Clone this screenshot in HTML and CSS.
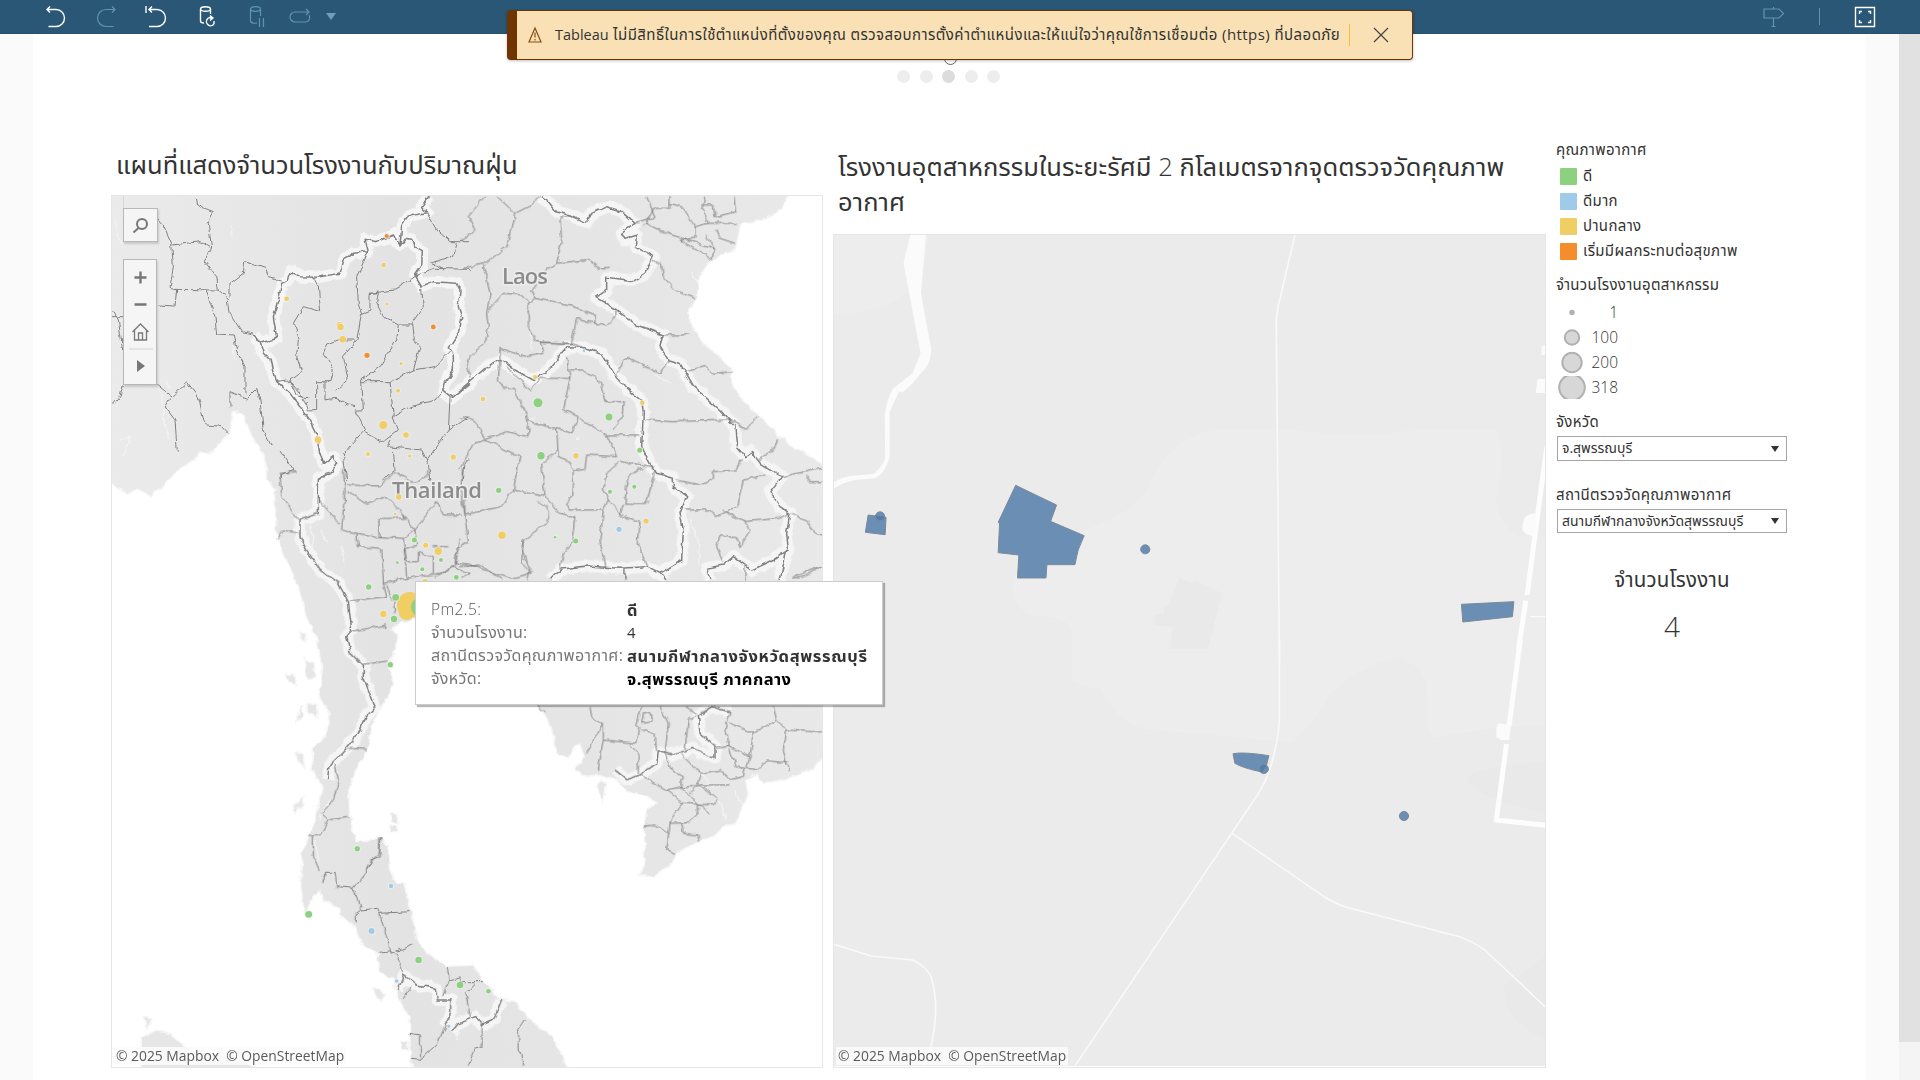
FILE: index.html
```html
<!DOCTYPE html>
<html lang="th">
<head>
<meta charset="utf-8">
<title>Tableau</title>
<link rel="stylesheet" href="styles.css">
</head>
<body>
<header class="toolbar">
  <svg class="tool tool-undo" width="24" height="24" viewBox="0 0 24 24"><path d="M3 4.5H12a7.8 7.8 0 0 1 0 17H4.500M6 1.500L3 4.500L6 7.500"/></svg>
  <svg class="tool tool-redo dim" width="24" height="24" viewBox="0 0 24 24"><path d="M21 4.500H12a7.800 7.800 0 0 0 0 17H19.500M18 1.500L21 4.500L18 7.500"/></svg>
  <svg class="tool tool-reset" width="24" height="24" viewBox="0 0 24 24"><path d="M5 4.500H13a7.800 7.800 0 0 1 0 17H5M8 1.500L5 4.500L8 7.500M2 1V8"/></svg>
  <svg class="tool tool-refresh" width="24" height="24" viewBox="0 0 24 24"><ellipse cx="8.500" cy="4" rx="5" ry="2.300"/><path d="M3.500 4V16C3.500 17.500 5 18 7 18M13.500 4V9M16 13A4.200 4.200 0 1 0 17 19M17 19V16M12.500 13H16M13 10.500L16 13L13 15.500"/></svg>
  <svg class="tool tool-pause dim" width="24" height="24" viewBox="0 0 24 24"><ellipse cx="8.500" cy="4" rx="5" ry="2.300"/><path d="M3.500 4V16C4 18 7 18.500 10 18M13.500 4V11M12.500 13V22M16.500 13V22"/></svg>
  <svg class="tool tool-loop dim" width="24" height="24" viewBox="0 0 24 24"><path d="M21 7H7a4.500 4.500 0 0 0 0 10H17a4.500 4.500 0 0 0 4-7M18 4L21 7L18 10"/></svg>
  <svg class="tool-caret" width="10" height="8" viewBox="0 0 10 8"><path d="M0 0H10L5 7Z"/></svg>
  <svg class="tool tool-sign dim" width="24" height="24" viewBox="0 0 24 24"><path d="M2 4H17L21.500 8.500L17 13H2ZM11.500 2V4M11.500 13V21.500M9.500 21.500H13.500"/></svg>
  <i class="tool-divider"></i>
  <svg class="tool tool-full" width="24" height="24" viewBox="0 0 24 24"><path d="M2.500 2.500H21.500V21.500H2.500ZM6.500 9V6.500H9M15 6.500H17.500V9M17.500 15V17.500H15M9 17.500H6.500V15"/></svg>
</header>

<div class="notice">
  <svg width="14" height="18" viewBox="0 0 14 18"><path d="M7 2L13 16H1ZM7 6.500V11.500M7 13V14.500"/></svg>
  <span class="notice-text"><span class="latin">Tableau</span> ไม่มีสิทธิ์ในการใช้ตำแหน่งที่ตั้งของคุณ ตรวจสอบการตั้งค่าตำแหน่งและให้แน่ใจว่าคุณใช้การเชื่อมต่อ (https) ที่ปลอดภัย</span>
  <svg class="notice-close" width="16" height="16" viewBox="0 0 16 16"><path d="M1 1L15 15M15 1L1 15"/></svg>
</div>

<main class="workspace">
  <div class="dashboard">
    <nav class="pager"><b class="ring"></b><i></i><i></i><i class="current"></i><i></i><i></i></nav>
    <div class="columns">
      <section class="panel panel-left">
        <h2 class="title">แผนที่แสดงจำนวนโรงงานกับปริมาณฝุ่น</h2>
        <div class="map">
          <svg width="710" height="871" viewBox="112 196 710 871">
            <defs>
              <filter id="rough" filterUnits="userSpaceOnUse" x="100" y="180" width="740" height="900"><feTurbulence type="fractalNoise" baseFrequency=".12" numOctaves="2" seed="4"/><feDisplacementMap in="SourceGraphic" scale="5.500" xChannelSelector="R" yChannelSelector="G"/></filter>
              <linearGradient id="relief" x1="0" x2="1"><stop offset="0" stop-color="#ebebeb"/><stop offset=".4" stop-color="#e3e3e3"/><stop offset=".75" stop-color="#e6e6e6"/><stop offset="1" stop-color="#e9e9e9"/></linearGradient>
            </defs>
            <g class="land" filter="url(#rough)">
              <path fill="url(#relief)" d="M100 185L792 185L788 196L780 210L760 220L740 223L735 248L708 262L697 280L696 297L687 313L693 330L707 348L730 367L731 382L743 402L760 417L780 438L803 453L835 472L835 748L813 767L797 775L773 781L763 782L757 773L745 780L747 793L740 811L735 823L723 826L715 835L697 842L677 852L672 863L653 876L641 875L645 865L645 827L647 810L658 803L647 796L630 792L617 780L600 775L583 775L575 770L585 757L580 742L573 748L568 757L557 753L555 737L548 720L540 707L520 680L490 660L460 650L430 625L415 618L400 622L390 628L396 635L395 650L388 663L393 683L383 703L372 723L367 750L355 770L348 790L349 817L355 842L367 842L380 837L387 847L389 870L396 885L404 883L410 910L417 940L426 953L447 967L473 966L482 980L500 1000L515 1002L529 1020L552 1037L570 1075L414 1075L411 1047L410 1017L398 997L398 982L379 970L378 953L361 943L356 927L342 917L340 907L324 900L319 890L310 900L305 915L301 880L303 853L310 835L313 830L323 787L313 770L313 748L327 737L330 713L320 697L323 670L317 637L307 617L300 590L292 570L282 550L277 530L275 490L267 477L267 465L263 453L253 437L243 413L233 410L228 433L210 453L200 452L193 460L177 470L167 480L160 487L150 495L137 488L128 493L105 480Z"/>
              <path d="M142 1037L157 1032L170 1034L184 1047L230 1058L275 1075L142 1075ZM145 1018l6 2l-3 6zM374 954l6 2M375 988l9 6l-3 6l-6-6zM600 782l6 2l-3 16l-5-12zM392 814l5 1v8l-5-2zM391 826l5 1v4h-5zM305 660l8 3l2 12l-8 4zM301 633l4 2v6l-4-2zM302 706l-4 14l4-4zM308 704l8 2v10l-8-4zM295 751l8 6v8l-4-6zM295 806l8-8v5l-7 8zM287 675l7 1l2 8l-7-3zM402 1042h6v8h-5z"/>
            </g>
            <g class="country-halo" filter="url(#rough)"><use href="#countries"/></g>
            <g class="rivers" filter="url(#rough)"><path d="M310 525l4 12l-2 10M341 545l4 18M321 530l6 14M690 520l8 20l2 25M165 380l6 8M160 390l4 30l6 20M120 440l10-3l-6 18M232 345l4 15M231 225l1 12M115 220l6 25M330 800l-8 12l-2 8M530 420l6-4M575 440l4-3M655 375l16 8M700 285l-8-12M530 330l2 20M720 800l6 20M735 790l8 16M700 770l12 18M315 840l4 20M460 1015l-3 25"/></g>
            <g class="provinces" filter="url(#rough)">
              <g transform="translate(100 180) scale(.33333)">
                <path d="M70 48V85M172 115L190 135L215 190L220 260L210 325L230 330L225 378L172 375M285 48L290 75L340 95L325 130L335 205L310 240L350 290L355 330L225 328M218 195L300 185L332 205M318 330L345 410L350 465L400 468L410 510L435 560L435 640M355 330L385 355L390 400L425 455L462 462M390 350L390 310L430 280L435 242L495 262L505 290L545 300M172 615L215 650L260 605L295 650L315 735L360 738L382 762M210 655L195 680L225 720L232 815M390 680L390 635L440 655L470 625L480 660L490 750L515 800M540 810L560 840L582 870L540 885V900M38 390L55 420L68 510M38 675L60 650L70 615M36 410H70M640 292L655 320L662 395L610 380L580 430L595 480L590 530L605 575L570 600L590 645L625 650M525 605L565 600L610 650L625 690L650 688L650 605H690L700 570L670 520L680 495L720 480L765 480M675 605V660L705 655L745 675L765 680M805 215L770 290L775 370L785 400L770 480L730 530L745 600L705 635M785 400L810 390V340L835 338L830 370L850 410L895 435L890 480L840 560L785 600L790 690L765 690L795 750L730 825L740 900M810 340L885 330L945 290M945 285L1000 265L1110 268M980 98L1010 150L1050 185L1110 185M1072 190L1060 225L995 250L1030 265M965 325L970 380L935 430L940 480L960 500L940 570L870 605L785 605M895 435H935M940 570L1005 560L1050 515M870 605L880 710L930 680L1005 660L1035 625M880 710L895 750L850 785L795 755M1050 655L1045 750L980 840L965 810L860 800L870 780M880 810L885 870L850 900M980 840L990 900M1045 750L1105 710M1110 835L1095 850L1090 900"/>
              </g>
              <g transform="translate(460 180) scale(.33333)">
                <path d="M75 48L25 110L45 150L0 185M110 48L165 100L140 200L75 250L0 268M165 100L215 75L240 48M330 105L300 115L305 180L290 250L390 238L410 265L450 262M290 250L260 270L215 330L225 355L340 380L405 405V430L350 415L335 490L225 485L205 440L205 365L190 345L130 340L85 390M70 255L90 340L80 400L85 440L75 490L20 540L30 595M405 430L440 438L465 410V385M225 355L205 370M240 487L340 492L365 500M240 487L255 520L200 530L120 505V540M525 130L560 120L585 110L560 50M555 130L620 160L700 185L765 205L750 240M555 135L580 85L630 85V48M630 70L665 80L705 140L705 175L660 180L750 235M735 48L725 90L745 130L705 140M745 130L830 130M730 75H760L765 110L830 95L825 50M770 150L780 175L825 190M735 165L765 210M580 240L605 255L610 290L645 330L705 355M610 465L690 465M680 570L740 560L760 580L815 575M470 585L490 540L510 535L600 580L625 540M120 540L115 600L130 625L160 625L195 690L200 725L205 770L140 755L75 780L50 730L20 710L0 715M140 560L210 630L240 595L330 595L320 530M330 570L370 570L420 605L435 665L490 665L485 720L460 750M330 595L310 690L355 710L335 760L290 745L225 730L200 720M360 715L440 765L470 830L380 825L375 865L340 870L320 840L295 830L290 745M440 765H540M555 720L640 725L805 720L860 745L895 710M75 780L40 790L0 870M75 780L180 830L160 930L120 980L15 1005V940M160 930L255 950L300 1000L345 1010L335 1090L310 1120L300 1165M255 950L245 850L290 810M340 870L335 950L320 970L330 990L430 990L420 1080L435 1165M430 990L445 960L430 930L440 880L480 845L580 860M550 865L515 880L500 910L495 970L560 970L585 870M480 1010L490 970M445 960L490 1010L540 1025L535 1090L560 1160M235 960L265 990L265 1025L190 1080L185 1110L210 1170L200 1200M675 990H750L765 1010L830 980L850 900L915 885M650 900L720 915L760 900V875L830 870L845 840M785 990L850 1025L955 1015L990 1000M850 1025L870 1050L840 1100L830 1070L780 1065L770 1100L790 1145M965 890L1085 865M1045 885L1045 905L1085 905M895 840L950 800L955 775M995 1000L1040 1025L1065 1060L1085 1065M1085 1160L1040 1185L1000 1195M855 1160V1200M0 1160L60 1155L130 1200M495 1165V1200"/>
              </g>
              <g transform="translate(100 470) scale(.33333)">
                <path d="M590 5L540 10L545 80L595 150M535 210L550 180L595 190M655 90L720 160M730 0L735 60L725 180L770 190L835 200L910 205L945 180L990 120L1010 95M740 45L840 48L885 5L940 40L980 20V0M740 65L800 100L860 80L910 130L945 180M910 130L915 145L840 145L840 200M770 190L775 230L845 235L850 340L920 325L910 205M1090 0L1085 60L1100 180L1105 215L1070 235L1065 280L1140 290M1010 95L1030 135L1085 135M850 340L860 380L750 393M750 485L860 465L855 475M860 345L880 400L885 430M790 583L865 573M745 835L800 838M705 880L715 930L700 990L665 1030L685 1050L745 1042M685 1050L660 1095L625 1100M640 1100V1160L658 1200M840 1100L838 1150L805 1180L800 1200M920 325L1020 310L1060 290L1110 310L1085 325M945 180L950 230L915 235L920 275L955 275V245L1000 260V310M1000 230L1045 230"/>
              </g>
              <g transform="translate(400 540) scale(.33333)">
                <path d="M180 0L165 80L105 110M370 0L365 70L395 100L330 115L210 75M675 85V123M1180 110L1265 80M410 495L433 520M570 500L575 530L610 550V600L595 690M610 550L560 640M610 600L710 610L720 560L710 555L725 500M730 520L750 515L755 545L725 550ZM780 500L805 550L795 640M725 570L765 580L770 635M690 615L715 640V700M860 500L890 520M890 525L865 540L855 630M990 515L975 570L985 620L1050 650L1060 580L990 550M1120 500L1130 540L1160 570L1150 630L1165 690M1060 580L1130 540M1160 570L1240 575L1265 572M1050 650L1040 685L1075 690L1100 660L1165 665M985 620L945 625M990 630L1005 680L1035 685L1030 710L990 720L960 690L905 700L890 735L985 735M840 640L870 670L905 700M795 640L815 690L850 710L840 740L800 750L725 705M840 740L895 790L930 820M840 740L905 740L955 775L940 795L850 790L815 835L810 850L865 848L895 820V790M890 740L870 760M800 750L850 790M735 858L765 855L805 880M810 850L800 930L825 940M845 850L850 880L895 885V905"/>
              </g>
              <g transform="translate(100 800) scale(.46577 .33333)">
                <path d="M480 230L485 217L507 217L510 260L545 265L560 330L595 325L600 340L665 335M485 215L478 250M603 110L600 170L580 180L570 220L545 265M550 370V340L560 330M600 340L625 460L670 435M600 460L625 455M635 460L652 520M745 500L750 540L735 590M750 540L775 530L775 548H785M790 545H822M805 550L785 580L795 650M670 560L650 597M665 700L688 705V778L670 775M688 778L725 730L740 680M820 675V740L805 745L790 797M913 660L898 690L900 750L910 797"/>
              </g>
            </g>
            <g class="countries" filter="url(#rough)">
              <g id="countries">
                <g transform="translate(100 180) scale(.33333)"><path d="M985 48L965 80L980 98L925 108L905 140L900 195L915 175L935 178L945 200L967 212L965 255L945 285L965 318L1000 305L1070 310L1080 330L1075 380L1085 410L1080 450L1048 500L1060 530V570L1035 610L1030 635L1055 655L1110 610M900 195L880 165L830 185L795 178L805 215L760 220L735 235L720 280L650 292L600 290L575 275L565 300L545 310L535 360L520 410L530 475L480 490L462 465M480 490L490 520L510 540L525 600L570 640L630 720L650 760L655 800L670 850L700 830L710 850L690 885L655 895"/></g>
                <g transform="translate(460 180) scale(.33333)"><path d="M0 630L35 600L75 565L125 540L165 570L220 600L265 570L290 540L320 500L365 502L425 520L465 585L500 625L545 660L550 700L545 800L570 850L590 880L640 895V920L680 950L660 1000L670 1050L665 1140L600 1180L560 1160L480 1165L380 1158L300 1168L270 1200M240 48L265 65L290 95L330 105L380 128L395 100L440 80L480 92L525 130L485 160L495 178L530 165L525 200L580 230L555 280L520 302L440 292V330L408 353L470 390L530 435L610 465L600 500L625 540L660 550L700 620L780 690L825 740L830 800L855 830L875 815L900 850L965 890L930 935L960 980L990 1000L980 1060L985 1110L940 1140L875 1170L820 1130L790 1155L740 1165L750 1200M980 1110L960 1200M600 1180L615 1200"/></g>
                <g transform="translate(100 470) scale(.33333)"><path d="M690 8L655 25V130L600 150V200L620 240L660 300L715 340L745 395L755 480L740 500L750 545L790 585V620L805 660L825 710L795 745L770 800L725 850L690 885L685 930"/></g>
                <g transform="translate(400 540) scale(.33333)"><path d="M990 515L935 500L895 525L900 580L945 620V655L905 640L880 622L820 645L775 635L770 670L720 705L680 718L645 690"/></g>
                <g transform="translate(100 800) scale(.46577 .33333)"><path d="M640 570L652 525L680 555L720 565L725 600H753V640L740 680M755 695L770 670L805 650L820 675L845 660L862 600"/></g>
              </g>
            </g>
            <text class="place" x="502" y="284" textLength="46">Laos</text>
            <text class="place" x="392" y="497.500" textLength="90">Thailand</text>
            <g class="dots yellow">
              <circle cx="383.700" cy="265" r="2.300"/><circle cx="286.700" cy="298.700" r="2.300"/><circle cx="387" cy="304" r="1.500"/><circle cx="339.500" cy="325" r="3"/><circle cx="340.500" cy="327" r="3.200"/><circle cx="342.700" cy="339.300" r="3.300"/><circle cx="401" cy="363.700" r="1.600"/><circle cx="398" cy="390.700" r="2"/><circle cx="383.300" cy="425" r="4"/><circle cx="406" cy="435" r="2.800"/><circle cx="318" cy="439.700" r="3.200"/><circle cx="368" cy="454" r="2"/><circle cx="409.700" cy="456" r="1.600"/><circle cx="453.300" cy="457" r="2.600"/><circle cx="535" cy="377" r="2"/><circle cx="483" cy="399" r="2.300"/><circle cx="642.300" cy="402.700" r="2.200"/><circle cx="576" cy="455.700" r="2.700"/><circle cx="646" cy="521" r="2.600"/><circle cx="502" cy="535.300" r="3.800"/><circle cx="398.700" cy="497" r="2.800"/><circle cx="395" cy="514" r="1.300"/><circle cx="425.700" cy="545.300" r="2.500"/><circle cx="438.300" cy="551.300" r="3.700"/><circle cx="425" cy="582" r="3"/><circle cx="383.300" cy="614" r="3.200"/>
            </g>
            <g class="yellow"><circle cx="410" cy="605" r="13"/><circle cx="406.700" cy="612" r="8"/></g>
            <g class="dots orange"><circle cx="386.700" cy="236" r="2.100"/><circle cx="433.300" cy="327" r="2.400"/><circle cx="367" cy="355.300" r="2.600"/></g>
            <g class="dots green">
              <circle cx="538" cy="402.700" r="4.500"/><circle cx="609" cy="417" r="3.400"/><circle cx="639.700" cy="450.300" r="2.500"/><circle cx="541" cy="455.700" r="3.700"/><circle cx="498.700" cy="490.300" r="2.600"/><circle cx="610" cy="491.700" r="2"/><circle cx="634.300" cy="486.700" r="2"/><circle cx="555" cy="537.300" r="1.300"/><circle cx="575.700" cy="541" r="2.500"/><circle cx="414.300" cy="540" r="2.500"/><circle cx="441" cy="560" r="2"/><circle cx="397.300" cy="562.700" r="1.400"/><circle cx="422.300" cy="569.300" r="2"/><circle cx="456.300" cy="577.300" r="2.400"/><circle cx="368.700" cy="587" r="2.700"/><circle cx="395.700" cy="597.300" r="3.400"/><circle cx="394" cy="619" r="3.200"/><circle cx="390.300" cy="664.700" r="2.600"/><circle cx="357.300" cy="848.700" r="2.600"/><circle cx="308.700" cy="914.300" r="3.400"/><circle cx="418.600" cy="960" r="3.200"/><circle cx="460" cy="985" r="3.300"/><circle cx="488.400" cy="991.300" r="2.300"/>
            </g>
            <circle class="green" cx="420.500" cy="607" r="9.500"/>
            <g class="dots blue"><circle cx="584" cy="350.700" r="1.200"/><circle cx="619" cy="529.300" r="2.600"/><circle cx="391" cy="886" r="2.200"/><circle cx="371.500" cy="931" r="3"/><circle cx="396.700" cy="981" r="1.800"/><circle cx="448.800" cy="1026.300" r="1.500"/></g>
          </svg>
          <div class="controls">
            <span class="search"><svg width="32" height="32" viewBox="0 0 32 32"><circle cx="18" cy="15" r="5"/><path d="M14.500 19L9.500 23.500"/></svg></span>
            <span class="zoomer"><svg width="32" height="124" viewBox="0 0 32 124"><path class="bold" d="M10.500 17.500H22.500M16.500 11.500V23.500M10.500 44.500H22.500"/><path class="fine" d="M8.500 72L16.500 64L24.500 72M10.500 70.500V80H22.500V70.500M14.500 80V73H18.500V80"/><path class="rule" d="M5 89H29"/><path class="play" d="M13 100V112L21 106Z"/></svg></span>
          </div>
          <span class="credit">© 2025 Mapbox&nbsp; © OpenStreetMap</span>
        </div>
      </section>

      <section class="panel panel-right">
        <h2 class="title">โรงงานอุตสาหกรรมในระยะรัศมี <span class="light">2</span> กิโลเมตรจากจุดตรวจวัดคุณภาพ<br><span class="title-end">อากาศ</span></h2>
        <div class="map">
          <svg class="local" width="711" height="831" viewBox="834 235 711 831">
            <g transform="translate(830 230) scale(.45956 .33333)">
              <path class="terrain" d="M555 900Q680 840 700 750Q740 630 835 597H1000Q1150 630 1280 597H1452Q1470 700 1450 800Q1450 880 1500 920H1558V1590H525V1200Q520 1160 440 1158Q390 1130 398 1040Z"/>
              <path class="terrain" d="M7 12H215L200 150Q150 240 7 255Z"/>
              <path class="shade" d="M760 1045L785 1058L795 1052L853 1090L822 1257H740L745 1193L706 1183L708 1155L726 1152L728 1130L735 1128Z"/>
              <path class="water" d="M175 12H209L198 190L220 355Q220 390 210 410L180 460L160 485H150L130 545V680Q120 730 98 745L55 750Q30 755 8 776V758Q25 740 50 737L95 732Q120 700 120 680L119 555Q125 500 138 475L180 430L197 370L160 100Z"/>
              <path class="road" d="M1012 14L975 230L971 270L978 1290"/>
              <path class="wide" d="M1560 650L1545 800L1517 1095M1514 1112L1498 1260"/>
              <path class="patch" d="M1548 350L1560 342V375H1548ZM1540 447H1560V489H1535ZM1535 850Q1505 850 1507 900Q1520 925 1535 915ZM1523 1158H1560V1162H1523Z"/>
              <g class="factory"><path d="M404 766L493 825L480 874L553 917Q537 960 533 1004H472L470 1044H408L411 975L366 968L369 880L366 877ZM83 855L122 862L120 914L77 907ZM1374 1123L1488 1115L1485 1160L1377 1176Z"/><ellipse cx="109" cy="859" rx="10" ry="13.500"/><ellipse cx="686" cy="958" rx="10" ry="13.500"/></g>
            </g>
            <g transform="translate(830 640) scale(.45956 .33333)">
              <path class="base" d="M510 50V100Q530 140 590 145Q620 250 690 268L1005 308Q1060 240 1090 160Q1150 80 1240 50Q1300 90 1300 150V260L1313 294L1450 262L1560 255V420H490V50Z"/>
              <path class="shade" d="M1560 365Q1380 380 1385 425Q1420 480 1560 520ZM1560 945L1465 1040Q1470 1150 1560 1200Z"/>
              <path class="road" d="M978 0V240Q970 380 930 465L533 1278M875 580L1070 765Q1090 785 1120 800L1370 890Q1400 905 1425 930L1560 1105M8 913L90 948L180 960Q210 980 220 1010Q230 1060 230 1100Q230 1200 205 1278"/>
              <path class="wide" d="M1502 0L1478 255M1472 312L1450 540L1560 556"/>
              <path class="patch" d="M1455 250L1482 255L1478 300H1460L1450 290V260Z"/>
              <g class="factory"><path d="M877 341Q900 335 955 347L950 375L940 396Q900 385 881 370Z"/><ellipse cx="944" cy="387" rx="10" ry="13.500"/><ellipse cx="1249" cy="528" rx="10" ry="13.500"/></g>
            </g>
          </svg>
          <span class="credit">© 2025 Mapbox&nbsp; © OpenStreetMap</span>
        </div>
      </section>

      <aside class="side">
        <h3 class="caption">คุณภาพอากาศ</h3>
        <ul class="legend">
          <li><i class="sw green"></i>ดี</li>
          <li><i class="sw blue"></i>ดีมาก</li>
          <li><i class="sw yellow"></i>ปานกลาง</li>
          <li><i class="sw orange"></i>เริ่มมีผลกระทบต่อสุขภาพ</li>
        </ul>
        <h3 class="caption sizes-title">จำนวนโรงงานอุตสาหกรรม</h3>
        <div class="sizes">
          <svg width="32" height="100" viewBox="0 0 32 100"><circle class="tiny" cx="16" cy="12.500" r="2.700"/><circle cx="16" cy="37.500" r="7.200"/><circle cx="16" cy="62.500" r="9.700"/><svg x="0" y="76" width="32" height="23"><circle cx="16" cy="11.500" r="12.800"/></svg></svg>
          <ul><li>1</li><li>100</li><li>200</li><li>318</li></ul>
        </div>
        <h3 class="caption province-title">จังหวัด</h3>
        <div class="select"><span>จ.สุพรรณบุรี</span><i></i></div>
        <h3 class="caption station-title">สถานีตรวจวัดคุณภาพอากาศ</h3>
        <div class="select"><span>สนามกีฬากลางจังหวัดสุพรรณบุรี</span><i></i></div>
        <div class="kpi"><span>จำนวนโรงงาน</span><b>4</b></div>
      </aside>
    </div>
  </div>
  <div class="track"><div class="thumb"></div></div>
</main>

<div class="tip">
  <span class="key pm">Pm2.5:</span><strong>ดี</strong>
  <span class="key">จำนวนโรงงาน:</span><span class="num">4</span>
  <span class="key">สถานีตรวจวัดคุณภาพอากาศ:</span><strong>สนามกีฬากลางจังหวัดสุพรรณบุรี</strong>
  <span class="key">จังหวัด:</span><strong class="black">จ.สุพรรณบุรี ภาคกลาง</strong>
</div>
</body>
</html>
```
FILE: styles.css
```css
* { box-sizing: border-box; }
body { margin: 0; height: 1080px; overflow: hidden; background: #fafafa; color: #333; font: 15px "Open Sans", "Noto Sans Thai", "Noto Sans", sans-serif; white-space: nowrap; }
svg { display: block; flex: none; }
h2, h3, ul { margin: 0; padding: 0; font-weight: 400; list-style: none; }

.toolbar { display: flex; align-items: center; height: 34px; background: #2a5775; border-bottom: 1px solid #265070; }
.tool { fill: none; stroke: #fff; stroke-width: 1.4; }
.tool.dim { stroke: #5f94b8; stroke-width: 1.2; }
.tool-undo { margin-left: 43.500px; }
.tool-redo { margin-left: 26px; }
.tool-reset { margin-left: 26px; }
.tool-refresh { margin-left: 29.500px; }
.tool-pause { margin-left: 26px; }
.tool-loop { margin-left: 17px; }
.tool-caret { margin-left: 14px; fill: #6f9fbf; }
.tool-sign { margin-left: 1426px; }
.tool-divider { width: 1px; height: 17px; margin-left: 33px; background: #5f94b8; }
.tool-full { margin-left: 33px; }

.notice { position: absolute; z-index: 3; left: 507px; top: 10px; width: 906px; height: 50px; display: flex; align-items: center; padding-left: 11px; background: #f9e1b5; border: 1px solid #6f3400; border-left-width: 10px; border-radius: 4px; box-shadow: 0 1px 3px rgba(0,0,0,.25); }
.notice svg { fill: none; stroke: #8a4a14; stroke-width: 1.2; }
.notice-text { width: 795px; margin-left: 13px; font-size: 15px; letter-spacing: .44px; height: 22px; line-height: 21px; border-right: 1px solid #f3c12c; }
.latin { font-size: 14.500px; letter-spacing: 0; }
.notice .notice-close { margin-left: 23px; stroke: #444; }

.workspace { display: flex; justify-content: space-between; height: 1046px; }
.dashboard { width: 1833px; margin-left: 33px; background: #fff; }
.track { width: 21px; background: #f4f4f4; }
.thumb { height: 1008px; background: #e1e1e1; }
.pager { position: relative; display: flex; gap: 9.500px; height: 106px; padding: 36px 0 0 864px; }
.pager i { width: 13px; height: 13px; border-radius: 50%; background: #ededed; }
.pager .current { background: #dcdcdc; }
.ring { position: absolute; left: 911px; top: 18px; width: 13px; height: 13px; border: 1.500px solid #666; border-radius: 50%; }

.columns { display: flex; gap: 10px; padding-left: 78px; }
.panel { display: flex; flex-direction: column; width: 712px; height: 928px; }
.panel-right { width: 713px; }
.title { font-size: 25.500px; line-height: 35px; padding: 7px 0 0 5px; color: #333; }
.panel-left .title { height: 55px; }
.panel-right .title { height: 94px; padding-top: 9px; letter-spacing: .07px; }
.light { font-weight: 300; font-size: 25.500px; }
.map { position: relative; flex: 1; border: 1px solid #e6e6e6; overflow: hidden; }
.land path { fill: #e6e6e6; stroke: #f6f6f6; stroke-width: 3; paint-order: stroke; }
.land path:first-child { fill: url(#relief); }
.countries path, .provinces path, .rivers path { fill: none; vector-effect: non-scaling-stroke; stroke-linejoin: round; }
.country-halo { stroke: #f5f5f5; stroke-width: 12; }
.rivers { stroke: #f3f3f3; stroke-width: 1.2; }
.provinces { stroke: #808080; stroke-width: 1; }
.countries { stroke: #808080; stroke-width: 1.5; }
.place { font: 600 22px "Open Sans", sans-serif; fill: #8c8c8c; stroke: #ececec; stroke-width: 3; paint-order: stroke; }
.dots { stroke: rgba(240,240,240,.7); stroke-width: 2; paint-order: stroke; }
.green { fill: #8cd17d; }
.blue { fill: #a0cbe8; }
.yellow { fill: #f1ce63; }
.orange { fill: #f68d2d; }
.controls { position: absolute; left: 11px; top: 12px; display: flex; flex-direction: column; gap: 17px; fill: none; stroke: #777; }
.search, .zoomer { width: 35px; border: 1px solid #b8b8b8; background: rgba(246,246,246,.88); box-shadow: 1px 2px 2px rgba(0,0,0,.15); }
.search { height: 34px; }
.zoomer { height: 126px; width: 34px; }
.search svg { stroke-width: 2; }
.bold { stroke-width: 2.4; }
.fine { stroke-width: 1.3; }
.rule { stroke: #d4d4d4; }
.play { fill: #777; stroke: none; }
.credit { position: absolute; left: 2px; bottom: 2px; height: 18px; padding: 0 2px; line-height: 18px; background: rgba(252,252,252,.85); color: #5a5a5a; font-size: 13.850px; }
.local { background: #ebebeb; }
.local path { vector-effect: non-scaling-stroke; fill: none; }
.local .terrain { fill: #ededed; }
.local .base { fill: #ebebeb; }
.local .shade { fill: #e9e9e9; }
.local .water { fill: #fbfbfb; }
.local .patch { fill: #fbfbfb; }
.local .road { stroke: #f9f9f9; stroke-width: 1.600; }
.local .wide { stroke: #fdfdfd; stroke-width: 5; }
.local .factory path, .factory ellipse { fill: rgba(78,121,167,.82); stroke: #7c8a98; stroke-width: 1; vector-effect: non-scaling-stroke; }

.side { width: 232px; }
.caption { height: 20px; line-height: 19px; font-size: 15px; letter-spacing: .3px; }
.legend { padding: 4px 0 0 4px; }
.legend li { display: flex; align-items: center; height: 25px; gap: 6px; font-size: 15px; letter-spacing: .35px; }
.sw { width: 17px; height: 17px; border-radius: 1px; }
.sw.green { background: #8cd17d; }
.sw.blue { background: #a0cbe8; }
.sw.yellow { background: #f1ce63; }
.sw.orange { background: #f68d2d; }
.sizes-title { margin-top: 11px; }
.sizes { display: flex; margin-top: 5px; height: 100px; }
.sizes circle { fill: #d7d7d7; stroke: #b1b1b1; stroke-width: 2; }
.sizes .tiny { fill: #b1b1b1; stroke: none; }
.sizes ul { width: 30px; text-align: right; font-weight: 300; font-size: 15.500px; line-height: 24px; }
.sizes li { height: 25px; }
.province-title { margin-top: 11px; line-height: 21px; }
.station-title { margin-top: 24px; }
.select { display: flex; align-items: center; justify-content: space-between; width: 230px; height: 25px; margin: 5px 0 0 1px; padding: 0 7px 0 4px; border: 1px solid #a5a5a5; font-size: 13.950px; }
.station-title + .select { height: 24px; margin-top: 4px; }
.select i { border: 4px solid transparent; border-top: 6px solid #333; border-bottom: 0; }
.kpi { display: flex; flex-direction: column; align-items: center; padding-top: 31px; font-size: 20.500px; letter-spacing: .2px; line-height: 30px; }
.kpi b { margin-top: 17px; font-size: 28px; font-weight: 300; }

.tip { position: absolute; z-index: 2; left: 415px; top: 581px; width: 468px; height: 124px; display: grid; grid-template-columns: 196px 1fr; grid-auto-rows: 23px; line-height: 23px; padding: 16px 15px; background: #fff; border: 1px solid #ccc; box-shadow: 2px 2px 1px rgba(0,0,0,.28); font-size: 16px; }
.key { color: #777; letter-spacing: .35px; }
.pm { font-weight: 300; font-size: 15.500px; letter-spacing: .4px; color: #555; }
.num { font-size: 15px; }
.tip strong { font-weight: 700; font-size: 16.500px; letter-spacing: .65px; }
.tip .black { color: #000; letter-spacing: .45px; }
```
